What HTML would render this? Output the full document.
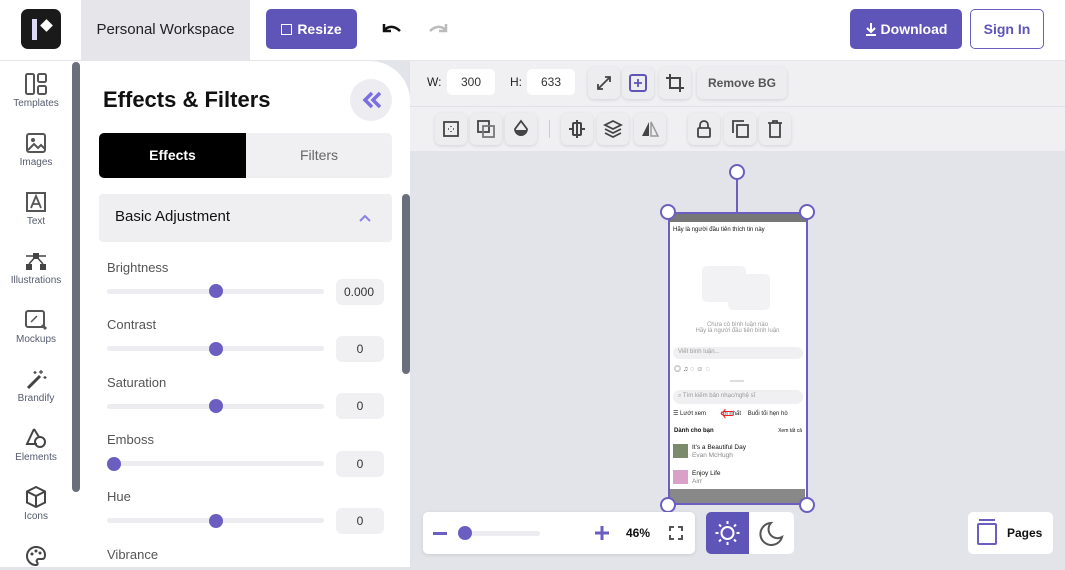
<!DOCTYPE html>
<html><head><meta charset="utf-8"><style>
*{box-sizing:border-box;margin:0;padding:0}
body{width:1065px;height:567px;overflow:hidden;font-family:"Liberation Sans","Noto Sans CJK SC",sans-serif;background:#e3e4e9;position:relative;color:#111}
.a{position:absolute}
.it{position:absolute;left:0;width:72px;text-align:center;font-size:10px;color:#555b6e}
.it svg{display:block;margin:0 auto 3px}
.lbl{position:absolute;left:107px;font-size:13px;color:#555}
.trk{position:absolute;left:107px;width:217px;height:5px;border-radius:3px;background:#ececf1}
.kn{position:absolute;width:14px;height:14px;border-radius:50%;background:#6a5fc1}
.val{position:absolute;left:336px;width:48px;height:26px;border-radius:6px;background:#f0f0f3;font-size:12px;text-align:center;line-height:26px;color:#333;overflow:hidden}
.tb{position:absolute;width:32px;height:32px;border-radius:6px;background:#ededf0;box-shadow:0 1px 3px rgba(0,0,0,.12)}
.tb svg{position:absolute;left:6px;top:6px}
</style></head><body>
<!-- header -->
<div class="a" style="left:0;top:0;width:1065px;height:61px;background:#fff;border-bottom:1px solid #e6e6ea"></div>
<div class="a" style="left:21px;top:9px;width:40px;height:40px;border-radius:7px;background:#1a1a1a"></div>
<div class="a" style="left:32px;top:19px;width:5px;height:21px;background:#ddd8f5"></div>
<div class="a" style="left:42px;top:21px;width:9px;height:9px;background:#fff;transform:rotate(45deg)"></div>
<div class="a" style="left:81px;top:0;width:169px;height:60px;background:#e5e5ea;font-size:15px;line-height:60px;text-align:center;color:#222">Personal Workspace</div>
<div class="a" style="left:266px;top:9px;width:91px;height:40px;border-radius:5px;background:#5f55b8;color:#fff;font-weight:bold;font-size:14px;line-height:40px;text-align:center"><span style="display:inline-block;width:11px;height:11px;border:1.5px solid #fff;margin-right:5px;vertical-align:-1px"></span>Resize</div>
<svg class="a" style="left:380px;top:19px" width="24" height="20"><path d="M4 5v7h7M4 12c3-5 10-6 16 0" fill="none" stroke="#111" stroke-width="2.5"/></svg>
<svg class="a" style="left:426px;top:19px" width="24" height="20"><path d="M20 5v7h-7M20 12c-3-5-10-6-16 0" fill="none" stroke="#bbb" stroke-width="2.5"/></svg>
<div class="a" style="left:850px;top:9px;width:112px;height:40px;border-radius:5px;background:#5f55b8;color:#fff;font-weight:bold;font-size:14px;line-height:40px;text-align:center"><svg width="12" height="14" style="vertical-align:-2px;margin-right:4px"><path d="M6 1v8M2 6l4 4 4-4M1 13h10" fill="none" stroke="#fff" stroke-width="2"/></svg>Download</div>
<div class="a" style="left:970px;top:9px;width:74px;height:40px;border-radius:5px;border:1px solid #6a5fc1;color:#5f55b8;font-weight:bold;font-size:14px;line-height:38px;text-align:center">Sign In</div>
<!-- sidebar -->
<div class="a" style="left:0;top:61px;width:80px;height:506px;background:#fff">
<div class="it" style="top:12px"><svg width="22" height="22"><rect x="1" y="1" width="8" height="20" rx="1.5" fill="none" stroke="#555" stroke-width="2"/><rect x="13" y="1" width="8" height="8" rx="1.5" fill="none" stroke="#555" stroke-width="2"/><rect x="13" y="13" width="8" height="8" rx="1.5" fill="none" stroke="#555" stroke-width="2"/></svg>Templates</div>
<div class="it" style="top:71px"><svg width="22" height="22"><rect x="2" y="2" width="18" height="18" rx="2" fill="none" stroke="#555" stroke-width="2"/><circle cx="8" cy="8" r="2" fill="#555"/><path d="M3 18l6-6 4 4 3-3 4 4" fill="none" stroke="#555" stroke-width="2"/></svg>Images</div>
<div class="it" style="top:130px"><svg width="22" height="22"><rect x="2" y="2" width="18" height="18" fill="none" stroke="#555" stroke-width="2"/><path d="M6 17l5-12 5 12M8 13h6" fill="none" stroke="#555" stroke-width="1.8"/></svg>Text</div>
<div class="it" style="top:189px"><svg width="24" height="22"><path d="M2 6h20M12 6L5 14M12 6l7 8" fill="none" stroke="#444" stroke-width="1.5"/><rect x="9" y="3" width="6" height="6" fill="#444"/><rect x="2" y="14" width="6" height="6" fill="#444"/><rect x="16" y="14" width="6" height="6" fill="#444"/></svg>Illustrations</div>
<div class="it" style="top:248px"><svg width="24" height="22"><rect x="2" y="2" width="18" height="16" rx="2" fill="none" stroke="#555" stroke-width="2"/><path d="M7 13l6-6" stroke="#555" stroke-width="1.5"/><path d="M18 16l4 4" stroke="#555" stroke-width="3"/></svg>Mockups</div>
<div class="it" style="top:307px"><svg width="22" height="22"><path d="M3 20L15 8" stroke="#444" stroke-width="3"/><path d="M16 2v4M14 4h4M20 8v3M18.5 9.5h3M10 3v3M8.5 4.5h3" stroke="#444" stroke-width="1.2"/></svg>Brandify</div>
<div class="it" style="top:366px"><svg width="22" height="22"><path d="M9 2L2 17h10" fill="none" stroke="#444" stroke-width="2"/><circle cx="15" cy="15" r="5" fill="none" stroke="#444" stroke-width="2"/><path d="M9 2l5 8" stroke="#444" stroke-width="2"/></svg>Elements</div>
<div class="it" style="top:425px"><svg width="22" height="22"><path d="M11 1l9 4.5v11L11 21l-9-4.5v-11zM2 5.5l9 4.5 9-4.5M11 10v11" fill="none" stroke="#444" stroke-width="2"/></svg>Icons</div>
<div class="it" style="top:484px"><svg width="22" height="22"><path d="M11 2a9 9 0 1 0 0 18c2 0 2-2 1-3s0-3 2-3h3c2 0 3-1 3-4 0-5-4-8-9-8z" fill="none" stroke="#444" stroke-width="2"/><circle cx="7" cy="9" r="1.5" fill="#444"/><circle cx="11" cy="6" r="1.5" fill="#444"/><circle cx="15" cy="8" r="1.5" fill="#444"/></svg></div>
</div>
<div class="a" style="left:72px;top:62px;width:8px;height:430px;border-radius:4px;background:#6b6f7c"></div>
<!-- panel -->
<div class="a" style="left:80px;top:61px;width:330px;height:506px;background:#fff;border-top-right-radius:40px"></div>
<div class="a" style="left:103px;top:87px;font-size:22px;font-weight:bold;color:#111">Effects &amp; Filters</div>
<div class="a" style="left:350px;top:79px;width:42px;height:42px;border-radius:50%;background:#ececf1"><svg width="42" height="42"><path d="M22 14l-7 7 7 7M30 14l-7 7 7 7" fill="none" stroke="#7b6fe0" stroke-width="3.5"/></svg></div>
<div class="a" style="left:99px;top:133px;width:293px;height:45px;border-radius:5px;background:#f0f0f3"></div>
<div class="a" style="left:99px;top:133px;width:147px;height:45px;border-radius:5px 0 0 5px;background:#000;color:#fff;font-weight:bold;font-size:14px;line-height:45px;text-align:center">Effects</div>
<div class="a" style="left:246px;top:133px;width:146px;height:45px;color:#666;font-size:14px;line-height:45px;text-align:center">Filters</div>
<div class="a" style="left:99px;top:194px;width:293px;height:48px;border-radius:4px;background:#efeff2;font-size:15px;line-height:46px;padding-left:16px;color:#111">Basic Adjustment<svg style="position:absolute;right:21px;top:20px" width="12" height="8"><path d="M1 7l5-5 5 5" fill="none" stroke="#8a80e6" stroke-width="2"/></svg></div>
<div class="a" style="left:402px;top:194px;width:8px;height:180px;border-radius:4px;background:#6b6f7c"></div>
<div class="lbl" style="top:260px">Brightness</div><div class="trk" style="top:289px"></div><div class="kn" style="left:209px;top:284px"></div><div class="val" style="top:279px;text-align:left;padding-left:8px">0.000</div>
<div class="lbl" style="top:317px">Contrast</div><div class="trk" style="top:346px"></div><div class="kn" style="left:209px;top:342px"></div><div class="val" style="top:336px">0</div>
<div class="lbl" style="top:375px">Saturation</div><div class="trk" style="top:404px"></div><div class="kn" style="left:209px;top:399px"></div><div class="val" style="top:393px">0</div>
<div class="lbl" style="top:432px">Emboss</div><div class="trk" style="top:461px"></div><div class="kn" style="left:107px;top:457px"></div><div class="val" style="top:451px">0</div>
<div class="lbl" style="top:489px">Hue</div><div class="trk" style="top:518px"></div><div class="kn" style="left:209px;top:514px"></div><div class="val" style="top:508px">0</div>
<div class="lbl" style="top:547px">Vibrance</div>
<!-- toolbars -->
<div class="a" style="left:410px;top:61px;width:655px;height:90px;background:#f0f0f3"></div>
<div class="a" style="left:410px;top:106px;width:655px;height:1px;background:#e0e0e5"></div>
<div class="a" style="left:427px;top:75px;font-size:12px;color:#222">W:</div>
<div class="a" style="left:447px;top:69px;width:48px;height:26px;border-radius:5px;background:#fff;font-size:12px;line-height:26px;text-align:center;color:#333">300</div>
<div class="a" style="left:510px;top:75px;font-size:12px;color:#222">H:</div>
<div class="a" style="left:527px;top:69px;width:48px;height:26px;border-radius:5px;background:#fff;font-size:12px;line-height:26px;text-align:center;color:#333">633</div>
<div class="tb" style="left:588px;top:67px"><svg width="20" height="20"><path d="M4 16l12-12M11 4h5v5M4 11v5h5" fill="none" stroke="#444" stroke-width="1.8"/></svg></div>
<div class="tb" style="left:622px;top:67px"><svg width="20" height="20"><rect x="2" y="2" width="16" height="16" rx="2" fill="none" stroke="#5f55b8" stroke-width="2"/><path d="M10 6v8M6 10h8" stroke="#5f55b8" stroke-width="1.8"/></svg></div>
<div class="tb" style="left:659px;top:67px"><svg width="20" height="20"><path d="M5 1v14h14M1 5h14v14" fill="none" stroke="#444" stroke-width="2"/></svg></div>
<div class="a" style="left:697px;top:67px;width:90px;height:32px;border-radius:6px;background:#ededf0;box-shadow:0 1px 3px rgba(0,0,0,.12);font-size:12px;font-weight:bold;color:#555;line-height:32px;text-align:center">Remove BG</div>
<div class="tb" style="left:435px;top:113px"><svg width="20" height="20"><rect x="3" y="3" width="14" height="14" fill="none" stroke="#444" stroke-width="1.8"/><path d="M10 7v1M10 12v1M7 10h1M12 10h1" stroke="#444" stroke-width="1.5"/></svg></div>
<div class="tb" style="left:470px;top:113px"><svg width="20" height="20"><rect x="2" y="2" width="11" height="11" fill="none" stroke="#444" stroke-width="1.8"/><rect x="7" y="7" width="11" height="11" fill="none" stroke="#777" stroke-width="1.8"/></svg></div>
<div class="tb" style="left:505px;top:113px"><svg width="20" height="20"><path d="M10 2l6 8a6 6 0 1 1-12 0z" fill="none" stroke="#444" stroke-width="1.8"/><path d="M4 11h12a6 6 0 0 1-12 0z" fill="#444"/></svg></div>
<div class="a" style="left:549px;top:120px;width:1px;height:18px;background:#ccc"></div>
<div class="tb" style="left:561px;top:113px"><svg width="20" height="20"><path d="M10 1v18M2 10h3M15 10h3" stroke="#444" stroke-width="2"/><rect x="6" y="4" width="8" height="12" rx="1" fill="none" stroke="#444" stroke-width="2"/></svg></div>
<div class="tb" style="left:597px;top:113px"><svg width="20" height="20"><path d="M10 2l8 4-8 4-8-4zM2 10l8 4 8-4M2 14l8 4 8-4" fill="none" stroke="#444" stroke-width="1.8"/></svg></div>
<div class="tb" style="left:634px;top:113px"><svg width="20" height="20"><path d="M9 3L2 17h7z" fill="#444"/><path d="M11 3l7 14h-7z" fill="none" stroke="#999" stroke-width="1.5"/></svg></div>
<div class="tb" style="left:688px;top:113px"><svg width="20" height="20"><rect x="4" y="9" width="12" height="9" rx="1" fill="none" stroke="#444" stroke-width="1.8"/><path d="M6 9V6a4 4 0 0 1 8 0v3" fill="none" stroke="#444" stroke-width="1.8"/></svg></div>
<div class="tb" style="left:724px;top:113px"><svg width="20" height="20"><path d="M3 14V2h11" fill="none" stroke="#444" stroke-width="1.8"/><rect x="7" y="6" width="11" height="12" fill="none" stroke="#444" stroke-width="1.8"/></svg></div>
<div class="tb" style="left:759px;top:113px"><svg width="20" height="20"><path d="M3 4h14M8 4V2h4v2M5 4v14h10V4" fill="none" stroke="#444" stroke-width="1.8"/></svg></div>
<!-- phone -->
<div class="a" style="left:736px;top:178px;width:2px;height:34px;background:#6a5fc1"></div>
<div class="a" style="left:729px;top:164px;width:16px;height:16px;border-radius:50%;background:#fff;border:2.5px solid #6a5fc1"></div>
<div class="a" style="left:668px;top:212px;width:140px;height:293px;background:#fff;border:2.5px solid #6a5fc1">
<div style="height:8px;background:#777"></div>
<div style="font-size:6px;padding:5px 3px;color:#111">Hãy là người đầu tiên thích tin này</div>
<div style="position:absolute;left:32px;top:52px;width:44px;height:36px;background:#f2f2f4;border-radius:5px"></div>
<div style="position:absolute;left:58px;top:60px;width:42px;height:36px;background:#f2f2f4;border-radius:5px"></div>
<div style="position:absolute;left:0;top:108px;width:135px;text-align:center;font-size:6px;color:#999">Chưa có bình luận nào<br>Hãy là người đầu tiên bình luận</div>
<div style="position:absolute;left:3px;top:133px;width:130px;height:12px;border-radius:6px;background:#f0f0f2;font-size:6px;color:#999;padding:2px 5px">Viết bình luận...</div>
<div style="position:absolute;left:4px;top:150px;font-size:7px;color:#555">◎ ♫ ◌ ☺ ◌</div>
<div style="position:absolute;left:60px;top:166px;width:14px;height:2px;background:#ddd"></div>
<div style="position:absolute;left:3px;top:176px;width:130px;height:14px;border-radius:7px;background:#f0f0f2;font-size:6px;color:#999;padding:3px 5px">⌕ Tìm kiếm bản nhạc/nghệ sĩ</div>
<div style="position:absolute;left:3px;top:196px;font-size:6px;color:#222;white-space:nowrap">☰ Lướt xem &nbsp;&nbsp;&nbsp;&nbsp;&nbsp;&nbsp;&nbsp;&nbsp;nh nhất &nbsp;&nbsp; Buổi tối hẹn hò</div>
<div style="position:absolute;left:50px;top:190px;color:#e22;font-size:14px">⇐</div>
<div style="position:absolute;left:4px;top:214px;font-size:6px;font-weight:bold">Dành cho bạn</div>
<div style="position:absolute;right:4px;top:214px;font-size:5px">Xem tất cả</div>
<div style="position:absolute;left:3px;top:230px;width:15px;height:14px;background:#7a8a6a"></div>
<div style="position:absolute;left:22px;top:230px;font-size:6.5px;line-height:8px">It's a Beautiful Day<br><span style="color:#888">Evan McHugh</span></div>
<div style="position:absolute;left:3px;top:256px;width:15px;height:14px;background:#d9a0c8"></div>
<div style="position:absolute;left:22px;top:256px;font-size:6.5px;line-height:8px">Enjoy Life<br><span style="color:#888">Airr</span></div>
<div style="position:absolute;left:0;bottom:0;width:135px;height:14px;background:#888"></div>
</div>
<div class="a" style="left:660px;top:204px;width:16px;height:16px;border-radius:50%;background:#fff;border:2.5px solid #6a5fc1"></div>
<div class="a" style="left:799px;top:204px;width:16px;height:16px;border-radius:50%;background:#fff;border:2.5px solid #6a5fc1"></div>
<div class="a" style="left:660px;top:497px;width:16px;height:16px;border-radius:50%;background:#fff;border:2.5px solid #6a5fc1"></div>
<div class="a" style="left:799px;top:497px;width:16px;height:16px;border-radius:50%;background:#fff;border:2.5px solid #6a5fc1"></div>
<!-- bottom -->
<div class="a" style="left:423px;top:512px;width:272px;height:42px;border-radius:5px;background:#fff;box-shadow:0 1px 4px rgba(0,0,0,.1)"></div>
<div class="a" style="left:433px;top:532px;width:14px;height:3px;background:#6a5fc1"></div>
<div class="a" style="left:460px;top:531px;width:80px;height:5px;border-radius:3px;background:#ececf1"></div>
<div class="a" style="left:458px;top:526px;width:14px;height:14px;border-radius:50%;background:#6a5fc1"></div>
<svg class="a" style="left:595px;top:526px" width="14" height="14"><path d="M7 0v14M0 7h14" stroke="#6a5fc1" stroke-width="3"/></svg>
<div class="a" style="left:626px;top:526px;font-size:12px;font-weight:bold">46%</div>
<svg class="a" style="left:669px;top:526px" width="14" height="14"><path d="M1 5V1h4M9 1h4v4M13 9v4H9M5 13H1V9" fill="none" stroke="#555" stroke-width="2"/></svg>
<div class="a" style="left:706px;top:512px;width:88px;height:42px;border-radius:5px;background:#fff"></div>
<div class="a" style="left:706px;top:512px;width:43px;height:42px;border-radius:5px 0 0 5px;background:#5f55b8"><svg width="43" height="42"><circle cx="21.5" cy="21" r="6" fill="none" stroke="#fff" stroke-width="2"/><path d="M21.5 9v3M21.5 30v3M9.5 21h3M30.5 21h3M13 12.5l2 2M28 27.5l2 2M13 29.5l2-2M28 14.5l2-2" stroke="#fff" stroke-width="2"/></svg></div>
<svg class="a" style="left:757px;top:520px" width="28" height="28"><path d="M14 3a11 11 0 1 0 11 14A9 9 0 0 1 14 3z" fill="none" stroke="#555" stroke-width="2"/></svg>
<div class="a" style="left:968px;top:512px;width:85px;height:42px;border-radius:5px;background:#fff"></div>
<div class="a" style="left:977px;top:523px;width:20px;height:22px;border:2px solid #6a5fc1;border-radius:2px"></div>
<div class="a" style="left:979px;top:519px;width:16px;height:2px;background:#6a5fc1"></div>
<div class="a" style="left:1007px;top:526px;font-size:12px;font-weight:bold;color:#111">Pages</div>
</body></html>
